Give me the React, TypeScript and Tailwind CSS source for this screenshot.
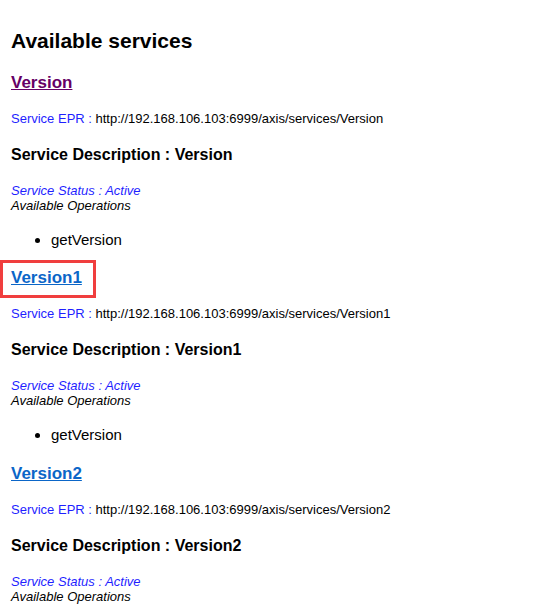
import React from "react";

const services = [
  { name: "Version", visited: true, boxed: false },
  { name: "Version1", visited: false, boxed: true },
  { name: "Version2", visited: false, boxed: false },
];

function ServiceBlock({ name, visited, boxed }: { name: string; visited: boolean; boxed: boolean }) {
  return (
    <div className="flex flex-col">
      <div className="relative">
        <a
          href="#"
          className={`text-[17px] leading-[20px] font-bold underline ${visited ? "text-[#660066]" : "text-[#0b66c8]"}`}
        >
          {name}
        </a>
        {boxed && (
          <div className="absolute left-[-11px] top-[-6px] w-[96px] h-[38px] border-[3px] border-[#f03e3e] pointer-events-none" />
        )}
      </div>
      <p className="mt-[16px] text-[13px] leading-[16px]">
        <span className="text-[#1f1fff]">Service EPR : </span>
        <span className="text-black">http://192.168.106.103:6999/axis/services/{name}</span>
      </p>
      <h3 className="mt-[18px] text-[16px] leading-[20px] font-bold text-black">Service Description : {name}</h3>
      <div className="mt-[18px] text-[13px] leading-[15px] italic">
        <div className="text-[#1f1fff]">Service Status : Active</div>
        <div className="text-black">Available Operations</div>
      </div>
      <ul className="mt-[18px] list-disc pl-[40px] text-[15px] leading-[18px] text-black">
        <li>getVersion</li>
      </ul>
    </div>
  );
}

export default function App() {
  return (
    <div className="w-[552px] h-[612px] overflow-hidden bg-white pl-[11px] pt-[29px] font-['Liberation_Sans',Arial,sans-serif]">
      <div className="flex flex-col gap-[17.5px]">
        <h2 className="text-[21px] leading-[24px] font-bold text-black">Available services</h2>
        {services.map((s) => (
          <ServiceBlock key={s.name} {...s} />
        ))}
      </div>
    </div>
  );
}
